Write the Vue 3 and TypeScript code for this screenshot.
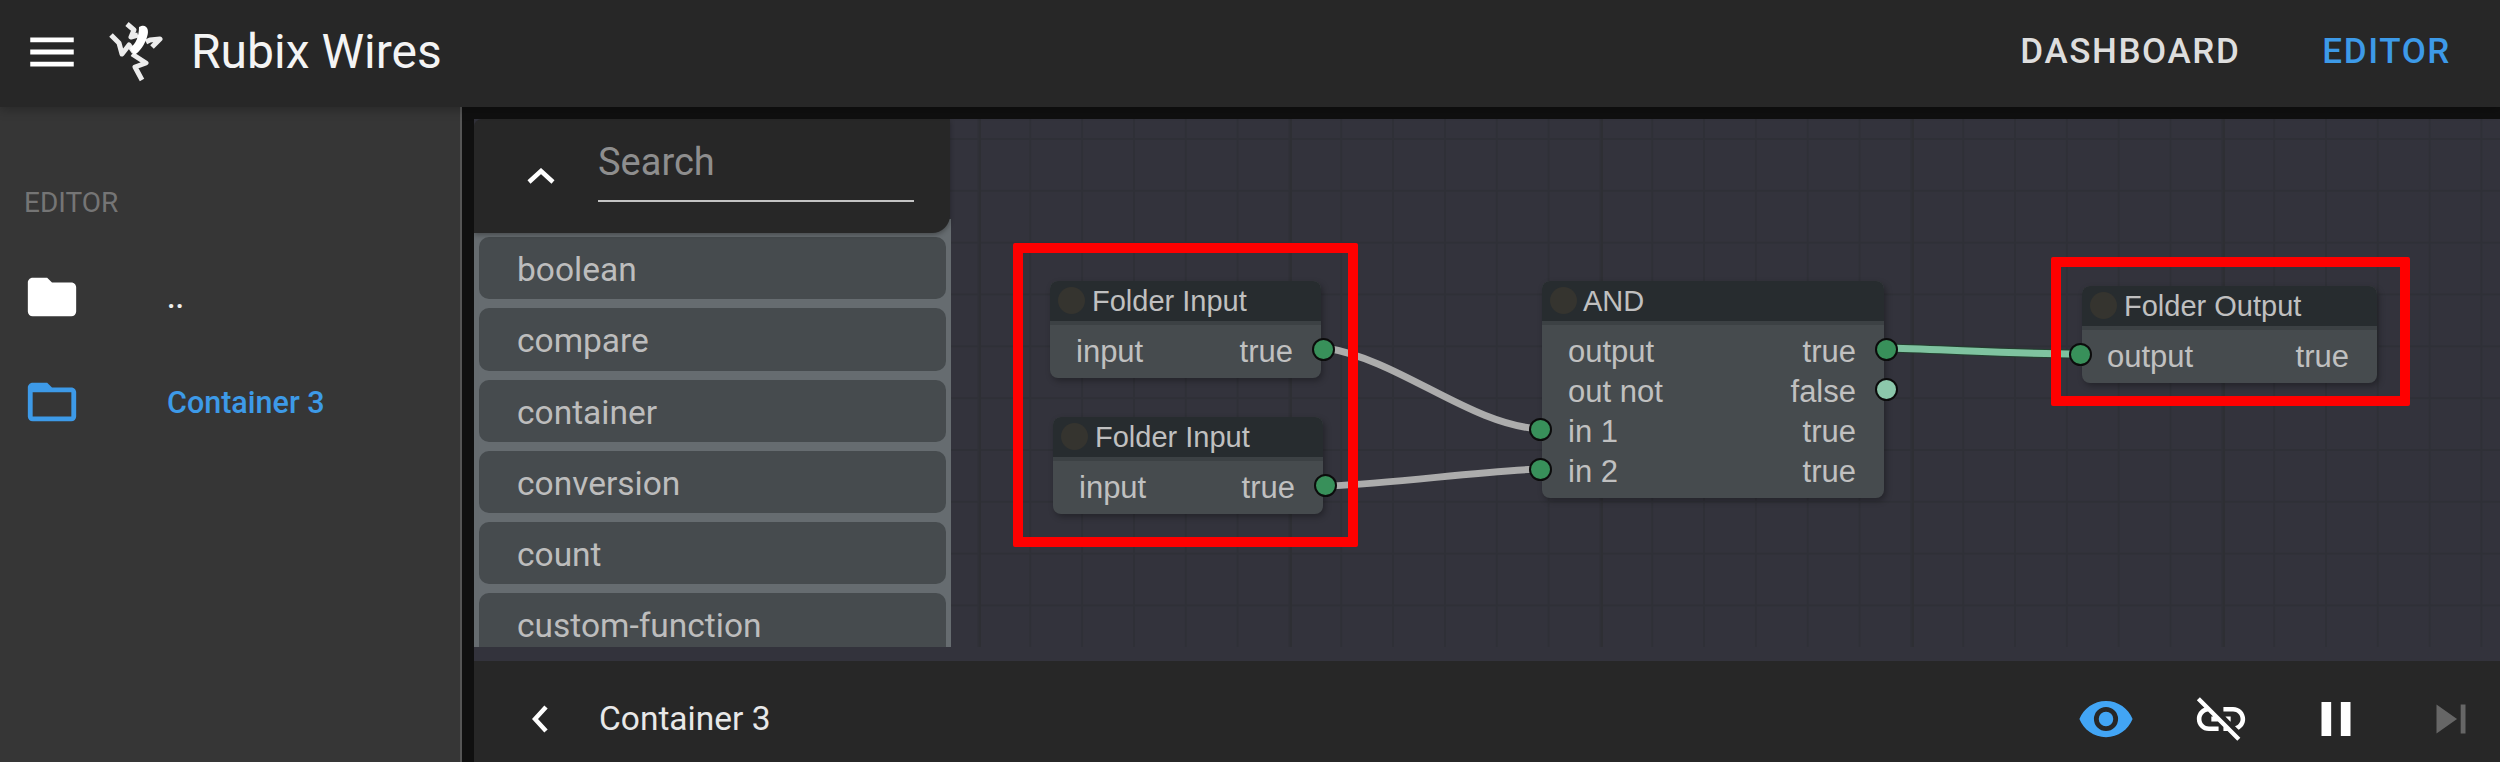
<script setup lang="ts">
interface Row { left: string; right: string }
interface Dot { side: 'l' | 'r'; row: number; light?: boolean }
interface GraphNode { title: string; x: number; y: number; w: number; rows: Row[]; dots: Dot[]; inset: number; titleInset: number }

const ox = 474
const oy = 119

const nodes: GraphNode[] = [
  { title: 'Folder Input', x: 1050, y: 281, w: 271, inset: 26, titleInset: 42, rows: [{ left: 'input', right: 'true' }], dots: [{ side: 'r', row: 0 }] },
  { title: 'Folder Input', x: 1053, y: 417, w: 270, inset: 26, titleInset: 42, rows: [{ left: 'input', right: 'true' }], dots: [{ side: 'r', row: 0 }] },
  {
    title: 'AND', x: 1542, y: 281, w: 342, inset: 26, titleInset: 41,
    rows: [
      { left: 'output', right: 'true' },
      { left: 'out not', right: 'false' },
      { left: 'in 1', right: 'true' },
      { left: 'in 2', right: 'true' },
    ],
    dots: [
      { side: 'r', row: 0 },
      { side: 'r', row: 1, light: true },
      { side: 'l', row: 2 },
      { side: 'l', row: 3 },
    ],
  },
  { title: 'Folder Output', x: 2082, y: 286, w: 295, inset: 25, titleInset: 42, rows: [{ left: 'output', right: 'true' }], dots: [{ side: 'l', row: 0 }] },
]

const categories = ['boolean', 'compare', 'container', 'conversion', 'count', 'custom-function']

function nodeStyle(n: GraphNode) {
  return { left: `${n.x - ox}px`, top: `${n.y - oy}px`, width: `${n.w}px`, '--inset': `${n.inset}px`, '--title-inset': `${n.titleInset}px` }
}
function dotStyle(d: Dot) {
  return { top: `${68 + d.row * 40 - 11.5}px` }
}
function p(x: number, y: number) {
  return `${x - ox} ${y - oy}`
}
const wire1 = `M${p(1326, 348)} C${p(1400, 360)} ${p(1470, 425)} ${p(1540, 429)}`
const wire2 = `M${p(1328, 486)} C${p(1400, 483)} ${p(1470, 472)} ${p(1540, 469)}`
const wire3 = `M${p(1888, 348)} C${p(1960, 350)} ${p(2010, 354)} ${p(2080, 354)}`

const frogLines = [
  '111,33 119,41 122,52 129,43 134,50',
  '127,22 134,28 131,35 138,33',
  '152,45 160,37 150,38 146,40',
  '132,52 146,61 135,65 142,78',
]
</script>

<template>
  <div class="app">
    <header class="topbar">
      <svg class="icon menu" viewBox="0 0 24 24"><path d="M3,6H21V8H3V6M3,11H21V13H3V11M3,16H21V18H3V16Z" /></svg>
      <svg class="frog" viewBox="108 18 56 64">
        <polyline v-for="l in frogLines" :key="l" :points="l" />
        <path class="frog-body" d="M139,25 C146,21 150,27 147,35 C145,42 140,50 134,53 L130,46 C136,42 139,34 139,25Z" />
      </svg>
      <span class="brand">Rubix Wires</span>
      <nav class="tabs">
        <a class="tab">DASHBOARD</a>
        <a class="tab active">EDITOR</a>
      </nav>
    </header>

    <div class="body">
      <aside class="sidebar">
        <div class="side-label">EDITOR</div>
        <div class="side-item">
          <svg class="icon" viewBox="0 0 24 24"><path d="M10,4H4C2.89,4 2,4.89 2,6V18A2,2 0 0,0 4,20H20A2,2 0 0,0 22,18V8C22,6.89 21.1,6 20,6H12L10,4Z" /></svg>
          <span class="side-text">..</span>
        </div>
        <div class="side-item current">
          <svg class="icon" viewBox="0 0 24 24"><path d="M20,18H4V8H20M20,6H12L10,4H4C2.89,4 2,4.89 2,6V18A2,2 0 0,0 4,20H20A2,2 0 0,0 22,18V8C22,6.89 21.1,6 20,6Z" /></svg>
          <span class="side-text">Container 3</span>
        </div>
      </aside>

      <main class="main">
        <section class="canvas">
          <div class="grid"></div>
          <div class="palette">
            <div class="search">
              <svg class="chev-up" viewBox="0 0 28 16"><polyline points="2,14 14,3 26,14" /></svg>
              <div class="search-field">Search</div>
            </div>
            <ul class="cats">
              <li v-for="c in categories" :key="c" class="cat">{{ c }}</li>
            </ul>
          </div>

          <svg class="wires">
            <path class="wire" :d="wire1" />
            <path class="wire" :d="wire2" />
            <path class="wire-edge" :d="wire3" />
            <path class="wire-on" :d="wire3" />
          </svg>

          <div v-for="(n, i) in nodes" :key="i" class="node" :style="nodeStyle(n)">
            <div class="node-title"><i class="lamp"></i><span>{{ n.title }}</span></div>
            <div class="node-body">
              <div v-for="r in n.rows" :key="r.left" class="node-row">
                <span>{{ r.left }}</span><span>{{ r.right }}</span>
              </div>
            </div>
            <i v-for="d in n.dots" :key="d.row" class="dot" :class="[d.side, { light: d.light }]" :style="dotStyle(d)"></i>
          </div>

          <div class="mark mark-a"></div>
          <div class="mark mark-b"></div>
        </section>

        <footer class="bottombar">
          <svg class="chev-left" viewBox="0 0 16 28"><polyline points="14,2 3,14 14,26" /></svg>
          <span class="crumb">Container 3</span>
          <div class="actions">
            <svg class="icon eye" viewBox="0 0 24 24"><path d="M12,9A3,3 0 0,0 9,12A3,3 0 0,0 12,15A3,3 0 0,0 15,12A3,3 0 0,0 12,9M12,17A5,5 0 0,1 7,12A5,5 0 0,1 12,7A5,5 0 0,1 17,12A5,5 0 0,1 12,17M12,4.5C7,4.5 2.73,7.61 1,12C2.73,16.39 7,19.5 12,19.5C17,19.5 21.27,16.39 23,12C21.27,7.61 17,4.5 12,4.5Z" /></svg>
            <svg class="icon" viewBox="0 0 24 24"><path d="M17 7h-4v1.9h4c1.71 0 3.1 1.39 3.1 3.1 0 1.43-.98 2.63-2.31 2.98l1.46 1.46C20.88 15.61 22 13.95 22 12c0-2.76-2.24-5-5-5zm-1 4h-2.19l2 2H16zM2 4.27l3.11 3.11C3.29 8.12 2 9.91 2 12c0 2.76 2.24 5 5 5h4v-1.9H7c-1.71 0-3.1-1.39-3.1-3.1 0-1.59 1.21-2.9 2.76-3.07L8.73 11H8v2h2.73L13 15.27V17h1.73l4.01 4L20 19.74 3.27 3 2 4.27z" /></svg>
            <svg class="icon" viewBox="0 0 24 24"><path d="M14,19H18V5H14V19M6,19H10V5H6V19Z" /></svg>
            <svg class="icon dim" viewBox="0 0 24 24"><path d="M16,18H18V6H16M6,18L14.5,12L6,6V18Z" /></svg>
          </div>
        </footer>
      </main>
    </div>
  </div>
</template>

<style>
html, body { margin: 0; background: #101010; }
</style>

<style scoped>
.app {
  width: 2500px;
  height: 762px;
  display: flex;
  flex-direction: column;
  overflow: hidden;
  font-family: Roboto, "Liberation Sans", sans-serif;
  color: #fff;
}
.icon { width: 58px; height: 58px; fill: #fff; flex: none; display: block; }

.topbar {
  height: 107px;
  flex: none;
  display: flex;
  align-items: center;
  background: #272727;
  padding: 0 0 4px 23px;
  box-sizing: border-box;
  position: relative;
  z-index: 2;
  box-shadow: 0 3px 10px rgba(0, 0, 0, .25);
}
.frog { width: 56px; height: 64px; margin-left: 27px; fill: none; filter: blur(.5px); }
.frog polyline { fill: none; stroke: #ececec; stroke-width: 5; stroke-linejoin: round; }
.frog-body { fill: #fff; }
.brand { font-size: 48px; margin-left: 27px; line-height: 1; color: #f4f4f4; }
.tabs { margin-left: auto; display: flex; gap: 82px; padding-right: 49px; }
.tab { font-size: 35px; font-weight: 500; letter-spacing: 1.6px; color: #dedede; line-height: 1; }
.tab.active { color: #3d9ae8; }

.body { flex: 1; display: flex; min-height: 0; }
.sidebar {
  width: 460px;
  flex: none;
  background: #363636;
  border-right: 2px solid #555;
  padding-top: 81px;
}
.side-label { font-size: 28px; color: #757575; line-height: 30px; padding-left: 24px; margin-bottom: 50px; }
.side-item { display: flex; align-items: center; height: 58px; padding-left: 23px; margin-bottom: 47px; }
.side-text { margin-left: 86px; font-size: 30.5px; font-weight: 500; color: #eee; }
.current .icon { fill: #3d9ae8; }
.current .side-text { color: #3d9ae8; }

.main { flex: 1; min-width: 0; display: flex; flex-direction: column; padding: 12px 0 0 12px; }
.canvas {
  height: 542px;
  flex: none;
  position: relative;
  overflow: hidden;
  background-color: #33333c;
}
.grid {
  position: absolute;
  inset: 0 0 14px 0;
  background-image:
    linear-gradient(90deg, #2e2f34 2.5px, transparent 2.5px),
    linear-gradient(#2f3037 2px, transparent 2px),
    linear-gradient(90deg, #2f3037 2px, transparent 2px);
  background-size: 311px 100%, 51.83px 51.83px, 51.83px 51.83px;
  background-position: 194px 0, 0 19px, 37px 0;
}

.palette { position: absolute; left: 0; top: 0; width: 477px; height: 528px; display: flex; flex-direction: column; z-index: 1; }
.search {
  height: 114px;
  flex: none;
  width: 476px;
  box-sizing: border-box;
  background: #272727;
  border-radius: 8px 0 18px 0;
  box-shadow: 0 2px 5px rgba(0, 0, 0, .3);
  display: flex;
  align-items: center;
  padding-left: 53px;
  position: relative;
  z-index: 1;
}
.chev-up { width: 28px; height: 16px; fill: none; stroke: #fff; stroke-width: 4.5; }
.search-field {
  margin-left: 43px;
  width: 316px;
  height: 81px;
  margin-top: -29px;
  box-sizing: border-box;
  border-bottom: 2px solid #c4c4c4;
  color: #8e8e8e;
  font-size: 38px;
  line-height: 82px;
}
.cats {
  list-style: none;
  margin: -14px 0 0;
  padding: 18px 5px 0 5px;
  flex: 1;
  min-height: 0;
  overflow: hidden;
  background: #666c70;
  display: flex;
  flex-direction: column;
  gap: 9px;
}
.cat {
  flex: none;
  height: 62.3px;
  line-height: 65px;
  background: #464b4e;
  border-radius: 10px;
  padding-left: 38px;
  color: #bdbdbd;
  font-size: 33.5px;
}

.wires { position: absolute; inset: 0; width: 100%; height: 100%; fill: none; }
.wire { stroke: #acacac; stroke-width: 7; }
.wire-edge { stroke: #23402f; stroke-width: 9; }
.wire-on { stroke: #7fc3a0; stroke-width: 7; }

.node {
  position: absolute;
  font-family: "Liberation Sans", Arial, sans-serif;
  border-radius: 8px;
  box-shadow: 2px 3px 6px rgba(0, 0, 0, .3);
  background: #464b4e;
  color: #c0c0c0;
}
.node-title {
  height: 40px;
  background: #272c2f;
  border-radius: 8px 8px 0 0;
  display: flex;
  align-items: center;
  padding-left: var(--title-inset);
  font-size: 29px;
  position: relative;
}
.lamp { position: absolute; left: 8px; top: 6px; width: 27px; height: 27px; border-radius: 50%; background: #35342f; }
.node-body { padding: 8px 0 9px; box-shadow: inset 0 4px 0 #3c4144; border-radius: 0 0 8px 8px; }
.node-row {
  height: 40px;
  line-height: 46px;
  display: flex;
  justify-content: space-between;
  padding: 0 28px 0 var(--inset);
  font-size: 31px;
}
.dot {
  position: absolute;
  width: 23px;
  height: 23px;
  box-sizing: border-box;
  border: 2.5px solid #0c0c0c;
  border-radius: 50%;
  background: #38905a;
}
.dot.r { right: -13.5px; }
.dot.l { left: -13.5px; }
.dot.light { background: #8cc8ab; }

.mark { position: absolute; border: 10px solid #f00; border-radius: 2px; box-sizing: border-box; z-index: 2; }
.mark-a { left: 539px; top: 124px; width: 345px; height: 304px; }
.mark-b { left: 1577px; top: 138px; width: 359px; height: 149px; }

.bottombar {
  flex: 1;
  background: #272727;
  display: flex;
  align-items: center;
  padding: 14px 0 0 58px;
}
.chev-left { width: 16px; height: 28px; fill: none; stroke: #fff; stroke-width: 4.5; }
.crumb { margin-left: 51px; font-size: 33.5px; color: #e8e8e8; }
.actions { margin-left: auto; display: flex; align-items: center; gap: 57px; padding-right: 20px; }
.eye { fill: #42a5f5; }
.dim { fill: #666; }
</style>
